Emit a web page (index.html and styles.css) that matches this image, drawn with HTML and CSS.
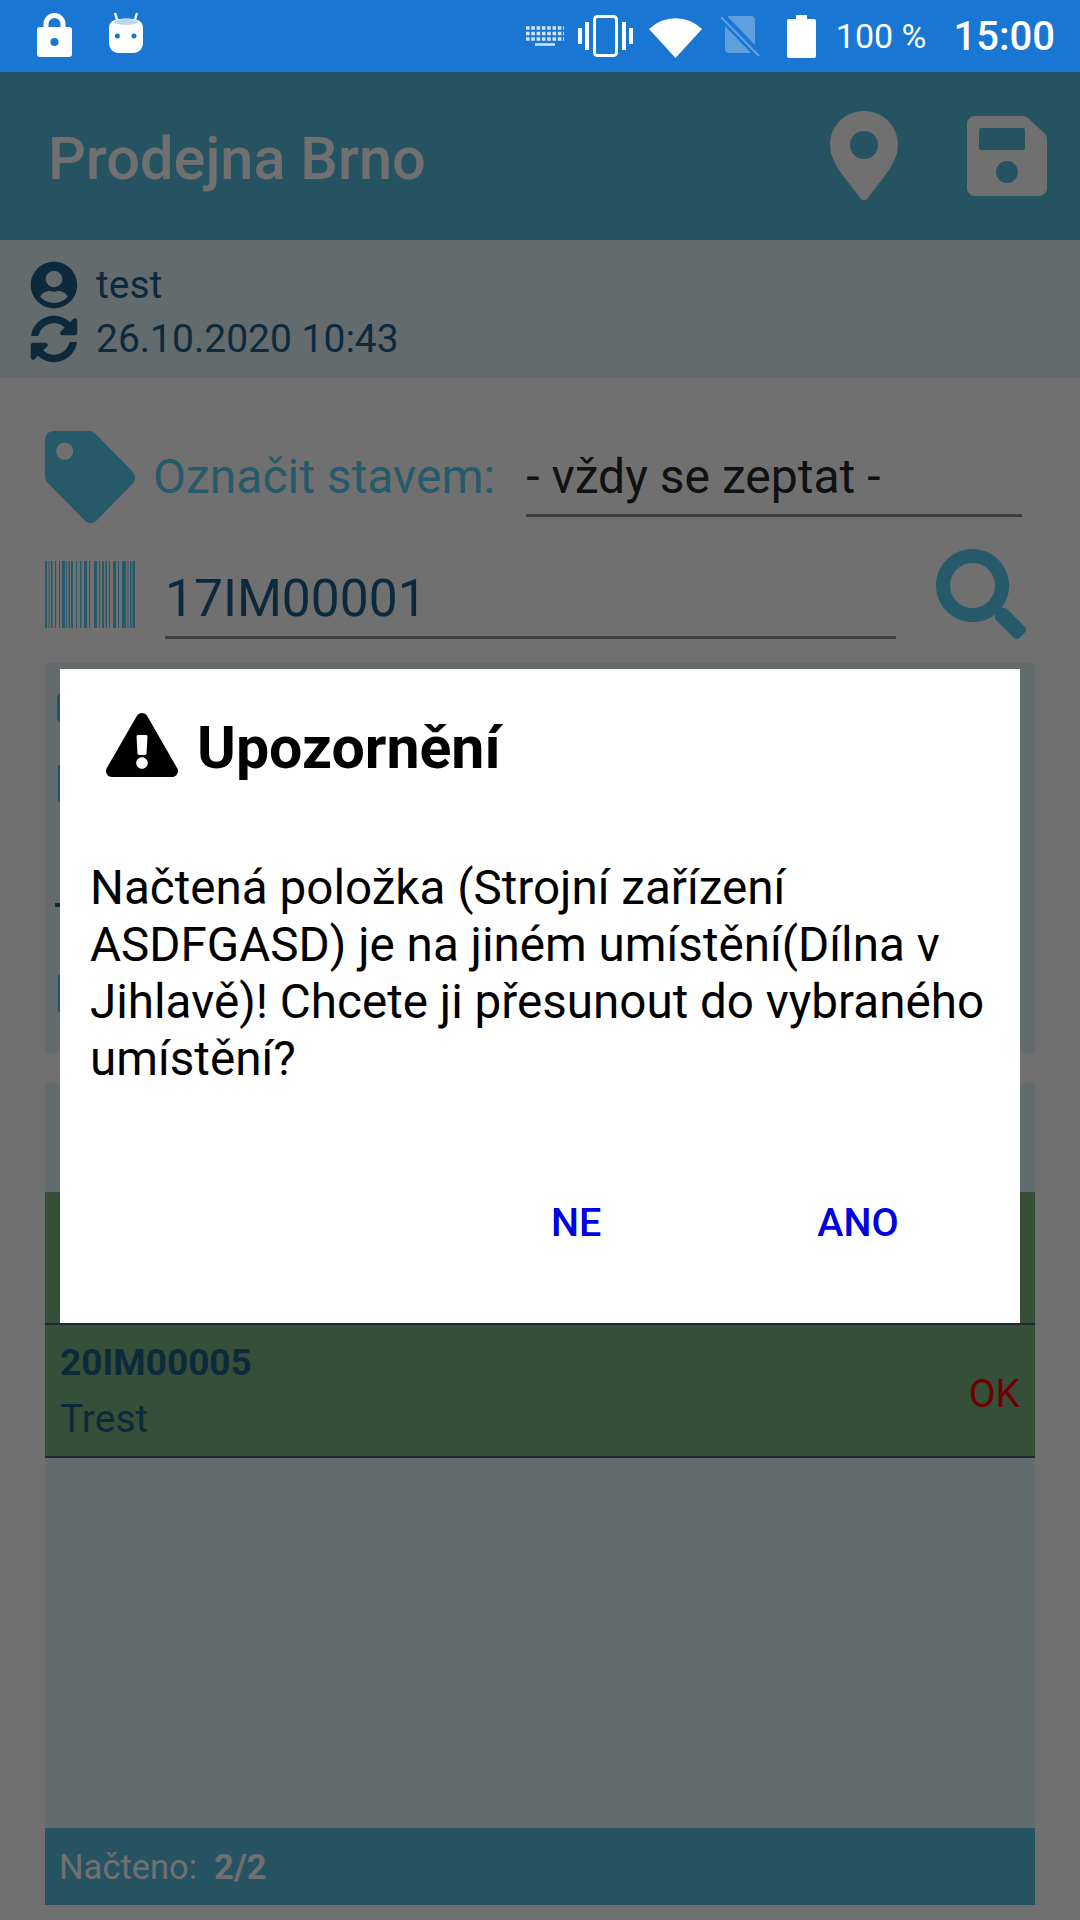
FILE: index.html
```html
<!DOCTYPE html>
<html lang="cs">
<head>
    <meta charset="UTF-8">
    <meta name="viewport" content="width=device-width, initial-scale=1.0">
    <title>Prodejna Brno</title>
    <link rel="stylesheet" href="styles.css">
</head>
<body>
    <div class="status-bar">
        <div class="status-left">
            <svg class="ic-lock" viewBox="0 0 35 44"><path d="M9 16V11a8.500 8.500 0 0 1 17 0v5" fill="none" stroke="#fff" stroke-width="5"/><path fill-rule="evenodd" d="M3 14h29a3 3 0 0 1 3 3v24a3 3 0 0 1-3 3H3a3 3 0 0 1-3-3V17a3 3 0 0 1 3-3zM17.500 25a4 4 0 1 0 0 8 4 4 0 0 0 0-8z"/></svg>
            <svg class="ic-droid" viewBox="0 0 34 40"><path d="M6 0l2.500 8M28 0l-2.500 8" stroke="#fff" stroke-width="2.400" fill="none"/><path d="M6 7C12 5 22 5 28 7c4 1 6 4 6 8v14c0 7-4 11-10 11H10C4 40 0 36 0 29V15c0-4 2-7 6-8z"/><ellipse cx="17" cy="9" rx="12" ry="3" fill="#bcd6f0"/><circle cx="8.300" cy="23" r="2.500" fill="#1976d2"/><circle cx="25" cy="23" r="2.500" fill="#1976d2"/></svg>
        </div>
        <div class="status-right">
            <svg class="ic-keys" viewBox="0 0 40 20"><path d="M1 2h38M1 7.500h38M1 13h38" stroke="#fff" stroke-width="3.600" stroke-dasharray="3.600 1.700" opacity=".8"/><path d="M10 18.500h20" stroke="#fff" stroke-width="2.600" opacity=".8"/></svg>
            <svg class="ic-vibrate" viewBox="0 0 55 42"><rect x="16.500" y="1.500" width="22" height="39" rx="3" fill="none" stroke="#fff" stroke-width="3"/><path d="M0 13h4v16H0zM7 7h4v28H7zM44 7h4v28h-4zM51 13h4v16h-4z"/></svg>
            <svg class="ic-wifi" viewBox="0 0 53 43"><path d="M0 14A38 38 0 0 1 53 14L26.500 43z"/></svg>
            <svg class="ic-sim" viewBox="0 0 40 41"><path d="M9 0h22a4 4 0 0 1 4 4v25L8 1zM5 10l26 27H9a4 4 0 0 1-4-4z" opacity=".3"/><path d="M1 1l38 39" stroke="#fff" stroke-width="2" opacity=".3"/></svg>
            <svg class="ic-battery" viewBox="0 0 29 43"><path d="M9 0h11v4h7a2 2 0 0 1 2 2v35a2 2 0 0 1-2 2H2a2 2 0 0 1-2-2V6a2 2 0 0 1 2-2h7z"/></svg>
            <span class="status-pct">100 %</span>
            <span class="status-time">15:00</span>
        </div>
    </div>

    <div class="app">
        <header class="app-header">
            <h1>Prodejna Brno</h1>
            <svg class="ic-pin" viewBox="0 0 68 90"><path fill-rule="evenodd" d="M34 0c19 0 34 15 34 34 0 12-7 22-14 32L37 88a4 4 0 0 1-6 0L14 66C7 56 0 46 0 34 0 15 15 0 34 0zM34 20a14 14 0 1 0 0 28 14 14 0 0 0 0-28z"/></svg>
            <svg class="ic-save" viewBox="0 0 80 80"><path fill-rule="evenodd" d="M8 0h48c2 0 4 1 6 3l15 14c2 2 3 4 3 6v49a8 8 0 0 1-8 8H8a8 8 0 0 1-8-8V8a8 8 0 0 1 8-8zM14 12a2 2 0 0 0-2 2v18a2 2 0 0 0 2 2h42a2 2 0 0 0 2-2V14a2 2 0 0 0-2-2zM40 45a11 11 0 1 0 0 22 11 11 0 0 0 0-22z"/></svg>
        </header>

        <div class="user-bar">
            <div class="user-row">
                <svg class="ic-user" viewBox="0 0 496 512"><path d="M248 8C111 8 0 119 0 256s111 248 248 248 248-111 248-248S385 8 248 8zm0 96c48.600 0 88 39.400 88 88s-39.400 88-88 88-88-39.400-88-88 39.400-88 88-88zm0 344c-58.700 0-111.300-26.600-146.500-68.200 18.800-35.400 55.600-59.800 98.500-59.800 2.400 0 4.800.4 7.100 1.100 13 4.200 26.600 6.900 40.900 6.900 14.300 0 28-2.700 40.900-6.900 2.300-.7 4.700-1.100 7.100-1.100 42.900 0 79.700 24.400 98.500 59.800C359.300 421.400 306.700 448 248 448z"/></svg>
                <span>test</span>
            </div>
            <div class="user-row">
                <svg class="ic-user" viewBox="0 0 512 512"><path d="M370.720 133.280C339.458 104.008 298.888 87.962 255.848 88c-77.458.068-144.328 53.178-162.791 126.850-1.344 5.363-6.122 9.150-11.651 9.150H24.103c-7.498 0-13.194-6.807-11.807-14.176C33.933 94.924 134.813 8 256 8c66.448 0 126.791 26.136 171.315 68.685L463.030 40.970C478.149 25.851 504 36.559 504 57.941V192c0 13.255-10.745 24-24 24H345.941c-21.382 0-32.090-25.851-16.971-40.971l41.750-41.749zM32 296h134.059c21.382 0 32.090 25.851 16.971 40.971l-41.750 41.750c31.262 29.273 71.835 45.319 114.876 45.280 77.418-.07 144.315-53.144 162.787-126.849 1.344-5.363 6.122-9.150 11.651-9.150h57.304c7.498 0 13.194 6.807 11.807 14.176C478.067 417.076 377.187 504 256 504c-66.448 0-126.791-26.136-171.315-68.685L48.970 471.030C33.851 486.149 8 475.441 8 454.059V320c0-13.255 10.745-24 24-24z"/></svg>
                <span>26.10.2020 10:43</span>
            </div>
        </div>

        <main class="content">
            <div class="state-row">
                <svg class="ic-tag" viewBox="0 0 512 512" preserveAspectRatio="none"><path d="M0 252.118V48C0 21.490 21.490 0 48 0h204.118a48 48 0 0 1 33.941 14.059l211.882 211.882c18.745 18.745 18.745 49.137 0 67.882L293.823 497.941c-18.745 18.745-49.137 18.745-67.882 0L14.059 286.059A48 48 0 0 1 0 252.118zM112 64c-26.510 0-48 21.490-48 48s21.490 48 48 48 48-21.490 48-48-21.490-48-48-48z"/></svg>
                <span class="state-label">Označit stavem:</span>
                <div class="state-select">- vždy se zeptat -</div>
            </div>
            <div class="code-row">
                <svg class="barcode" viewBox="0 0 90 67" preserveAspectRatio="none"><path d="M0 0h2v67H0zM3.500 0h1v67h-1zM6 0h1.500v67H6zM10 0h1v67h-1zM14 0h1v67h-1zM17 0h3v67h-3zM21 0h1v67h-1zM23.500 0h1.500v67h-1.500zM26 0h2v67h-2zM31 0h1v67h-1zM35 0h1.500v67H35zM39 0h3v67h-3zM44 0h1v67h-1zM49 0h3v67h-3zM54 0h1v67h-1zM57 0h2v67h-2zM60.500 0h1.500v67h-1.500zM64 0h1v67h-1zM68 0h3v67h-3zM73 0h1v67h-1zM77 0h4v67h-4zM82.500 0h1v67h-1zM85 0h1.500v67H85zM87.500 0h2.500v67h-2.500z"/></svg>
                <div class="code-input">17IM00001</div>
                <svg class="ic-search" viewBox="0 0 512 512"><path d="M505 442.700L405.300 343c-4.500-4.500-10.600-7-17-7H372c27.600-35.300 44-79.700 44-128C416 93.100 322.900 0 208 0S0 93.100 0 208s93.100 208 208 208c48.300 0 92.700-16.400 128-44v16.300c0 6.400 2.500 12.500 7 17l99.700 99.700c9.400 9.400 24.600 9.400 33.900 0l28.300-28.300c9.400-9.400 9.400-24.600.1-34zM208 336c-70.700 0-128-57.200-128-128 0-70.700 57.200-128 128-128 70.700 0 128 57.200 128 128 0 70.700-57.200 128-128 128z"/></svg>
            </div>
            <div class="detail-panel">
                <i class="mark mark-round"></i>
                <i class="mark mark-tall"></i>
                <i class="mark mark-dash"></i>
                <i class="mark mark-last"></i>
            </div>
            <div class="list">
                <div class="list-head"></div>
                <div class="item"></div>
                <div class="item">
                    <div class="item-text">
                        <b>20IM00005</b>
                        <span>Trest</span>
                    </div>
                    <span class="item-state">OK</span>
                </div>
                <div class="list-fill"></div>
                <div class="list-foot">Načteno: <b>2/2</b></div>
            </div>
        </main>

        <div class="scrim">
            <div class="dialog">
                <div class="dialog-title">
                    <svg class="ic-warn" viewBox="0 0 576 512"><path d="M569.517 440.013C587.975 472.007 564.806 512 527.940 512H48.054c-36.937 0-59.999-40.055-41.577-71.987L246.423 24.035c18.467-32.009 64.720-31.951 83.154 0l239.940 416.978zM288 354c-25.405 0-46 20.595-46 46s20.595 46 46 46 46-20.595 46-46-20.595-46-46-46zm-43.673-165.346l7.418 136c.347 6.364 5.609 11.346 11.982 11.346h48.546c6.373 0 11.635-4.982 11.982-11.346l7.418-136c.375-6.874-5.098-12.654-11.982-12.654h-63.383c-6.884 0-12.356 5.780-11.981 12.654z"/></svg>
                    <span>Upozornění</span>
                </div>
                <p class="dialog-text">Načtená položka (Strojní zařízení ASDFGASD) je na jiném umístění(Dílna v Jihlavě)! Chcete ji přesunout do vybraného umístění?</p>
                <div class="dialog-buttons">
                    <span class="btn-no">NE</span>
                    <span class="btn-yes">ANO</span>
                </div>
            </div>
        </div>
    </div>
</body>
</html>
```

FILE: styles.css
```css
* {
    box-sizing: border-box;
}
html, body {
    margin: 0;
    height: 1920px;
    overflow: hidden;
}
body {
    font-family: Roboto, "Noto Sans", sans-serif;
    background: #e0e0e0;
    color: #1a5478;
}
svg {
    display: block;
    flex: none;
}

/* status bar */
.status-bar {
    height: 72px;
    background: #1976d2;
    color: #fff;
    fill: #fff;
    display: flex;
    justify-content: space-between;
    align-items: center;
    padding: 0 25px 0 37px;
}
.status-left, .status-right {
    display: flex;
    align-items: center;
}
.ic-lock { width: 35px; height: 44px; margin-top: -2px; }
.ic-droid { width: 34px; height: 40px; margin-left: 37px; margin-top: -6px; }
.ic-keys { width: 40px; height: 20px; }
.ic-vibrate { width: 55px; height: 42px; margin-left: 13px; }
.ic-wifi { width: 53px; height: 43px; margin-left: 16px; }
.ic-sim { width: 40px; height: 41px; margin-left: 18px; }
.ic-battery { width: 29px; height: 43px; margin-left: 27px; }
.status-pct { font-size: 34px; margin-left: 20px; }
.status-time { font-size: 40px; font-weight: 500; margin-left: 27px; }

/* app */
.app {
    position: relative;
    height: 1848px;
    display: flex;
    flex-direction: column;
}
.app-header {
    height: 168px;
    background: #4ca6c2;
    color: #e0e0e0;
    fill: #e0e0e0;
    display: flex;
    align-items: center;
    padding: 0 33px 0 48px;
}
.app-header h1 {
    flex: 1;
    margin: 0;
    padding-top: 5px;
    font-size: 59.500px;
    font-weight: 500;
}
.ic-pin { width: 68px; height: 90px; margin-right: 69px; }
.ic-save { width: 80px; height: 80px; }

.user-bar {
    height: 138px;
    background: #c6d6da;
    padding: 18px 0 0 30px;
    font-size: 39px;
}
.user-row {
    display: flex;
    align-items: center;
    gap: 18px;
    height: 54px;
    fill: #1a5478;
}
.ic-user { width: 48px; height: 48px; }

.content {
    flex: 1;
    min-height: 0;
    padding: 53px 45px 15px;
    display: flex;
    flex-direction: column;
}
.state-row {
    display: flex;
    align-items: flex-start;
    height: 92px;
}
.ic-tag { width: 90px; height: 92px; fill: #4cb4d4; }
.state-label {
    font-size: 48px;
    line-height: 92px;
    color: #4cb4d4;
    margin-left: 18px;
}
.state-select {
    width: 496px;
    margin-left: 31px;
    margin-top: 11px;
    height: 75px;
    line-height: 70px;
    font-size: 48px;
    color: #222;
    border-bottom: 3px solid #7c7c7c;
}
.code-row {
    display: flex;
    align-items: center;
    margin-top: 26px;
    height: 90px;
}
.barcode {
    width: 90px;
    height: 67px;
    fill: #4cb4d4;
}
.code-input {
    width: 731px;
    height: 90px;
    margin-left: 30px;
    padding-top: 12px;
    line-height: 75px;
    font-size: 51.500px;
    color: #1a5478;
    border-bottom: 3px solid #7c7c7c;
}
.ic-search {
    width: 90px;
    height: 90px;
    margin-left: 40px;
    fill: #4cb4d4;
}

.detail-panel {
    height: 390px;
    margin-top: 24px;
    background: #c6d6da;
    padding-top: 30px;
    display: flex;
    flex-direction: column;
    align-items: flex-start;
}
.mark {
    display: block;
    width: 3px;
    height: 37px;
    margin-left: 13px;
    background: #4ca6c2;
}
.mark-round { width: 5px; height: 30px; margin-left: 12px; border-radius: 5px 0 0 5px; }
.mark-tall { margin-top: 42px; }
.mark-dash { width: 6px; height: 4px; margin-left: 10px; margin-top: 101px; background: #1a5478; }
.mark-last { margin-top: 68px; }

.list {
    flex: 1;
    min-height: 0;
    margin-top: 30px;
    background: #c6d6da;
    display: flex;
    flex-direction: column;
}
.list-head {
    height: 109px;
}
.item {
    height: 133px;
    background: #6c9e70;
    border-bottom: 2px solid #30506a;
    display: flex;
    align-items: center;
    justify-content: space-between;
    padding: 2px 15px 0;
    font-size: 39px;
}
.item-text {
    display: flex;
    flex-direction: column;
    gap: 12px;
}
.item-text b {
    font-size: 37px;
}
.item-state { color: #e00000; padding-top: 5px; }
.list-fill {
    flex: 1;
}
.list-foot {
    height: 77px;
    background: #4ba6c4;
    color: #e0e0e0;
    font-size: 34.500px;
    padding: 0 14px;
    display: flex;
    align-items: center;
    gap: 17px;
}

/* dialog */
.scrim {
    position: absolute;
    inset: 0;
    background: rgba(0, 0, 0, 0.5);
}
.dialog {
    position: absolute;
    left: 60px;
    top: 597px;
    width: 960px;
    height: 654px;
    background: #fff;
    color: #000;
    padding: 0 30px;
}
.dialog-title {
    display: flex;
    align-items: center;
    gap: 19px;
    padding: 44px 0 0 16px;
    font-size: 59px;
    font-weight: 700;
}
.ic-warn { width: 72px; height: 64px; margin-top: -5px; }
.dialog-text {
    margin: 78px 0 0;
    font-size: 47.600px;
    line-height: 57px;
}
.dialog-buttons {
    position: absolute;
    right: 0;
    bottom: 77px;
    left: 0;
    display: flex;
    color: #0000e0;
    font-size: 39.500px;
    font-weight: 500;
}
.btn-no { margin-left: 491px; }
.btn-yes { margin-left: 216px; }
```
